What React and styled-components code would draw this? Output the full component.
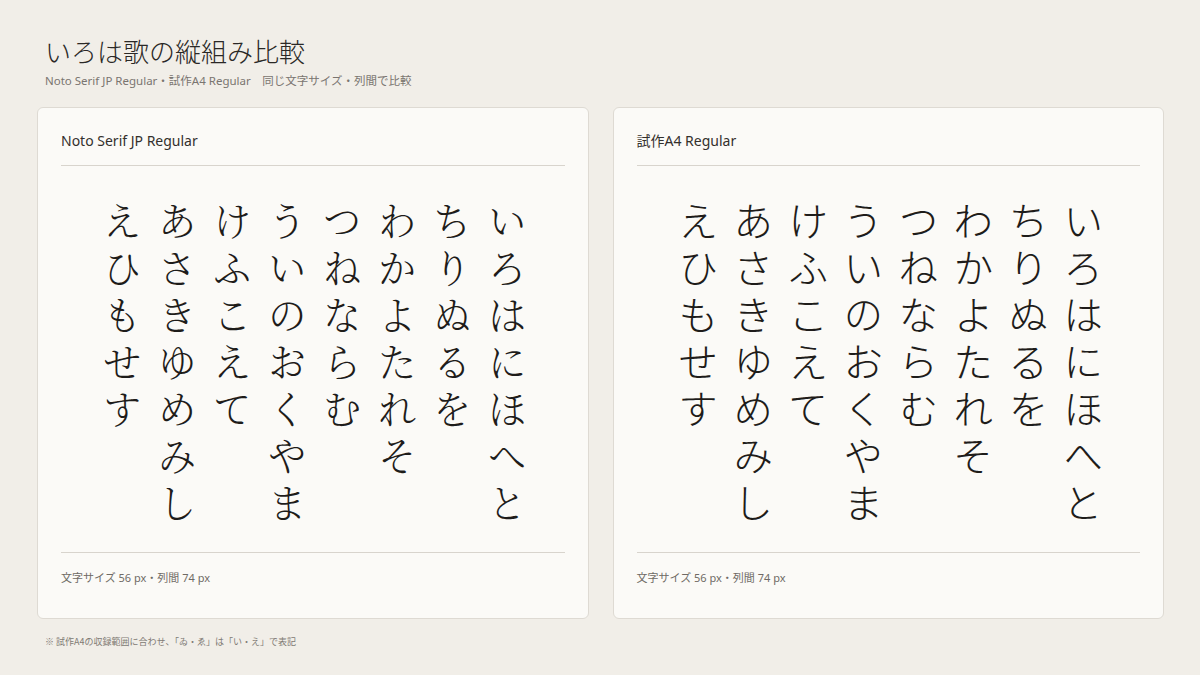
import React from "react";
import styled, { createGlobalStyle } from "styled-components";

const GlobalStyle = createGlobalStyle`
  html, body { margin: 0; padding: 0; }
  body {
    background: #f1eee8;
    font-family: "Noto Sans", "Noto Sans CJK JP", sans-serif;
    color: #2a2826;
  }
`;

const Page = styled.div`
  width: 1200px;
  height: 675px;
  box-sizing: border-box;
  padding: 34px 36px 0 37px;
  display: flex;
  flex-direction: column;
`;

const Title = styled.h1`
  margin: 0 0 0 8px;
  font-family: "Noto Sans CJK JP", serif;
  font-weight: 300;
  font-size: 26px;
  line-height: 34px;
  color: #2a2826;
`;

const Sub = styled.div`
  margin: 4px 0 0 8px;
  font-family: "Noto Sans", "Noto Sans CJK JP", sans-serif;
  font-size: 11.5px;
  color: #7a7570;
`;

const Cards = styled.div`
  display: flex;
  gap: 24px;
  margin-top: 19px;
`;

const Card = styled.section`
  width: 552px;
  height: 512px;
  box-sizing: border-box;
  background: #fbfaf7;
  border: 1px solid #dedad3;
  border-radius: 6px;
  padding: 0 23px;
  display: flex;
  flex-direction: column;
`;

const CardHead = styled.div`
  height: 58px;
  box-sizing: border-box;
  display: flex;
  align-items: flex-end;
  padding-bottom: 15px;
  border-bottom: 1px solid #d8d4cd;
  font-family: "Noto Sans", "Noto Sans CJK JP", sans-serif;
  font-size: 14px;
  color: #33302d;
`;

const Body = styled.div`
  flex: 1;
  display: flex;
  justify-content: center;
  align-items: flex-start;
  padding-top: 35px;
`;

const Poem = styled.div`
  writing-mode: vertical-rl;
  font-family: ${(p) => p.$font};
  font-weight: 300;
  font-size: 40px;
  line-height: 55px;
  letter-spacing: 7px;
  color: #1e1c1a;
  height: 340px;
  padding-left: 4px;
`;

const CardFoot = styled.div`
  height: 66px;
  box-sizing: border-box;
  border-top: 1px solid #d8d4cd;
  padding-top: 16px;
  font-family: "Noto Sans", "Noto Sans CJK JP", sans-serif;
  font-size: 11px;
  color: #6f6a65;
`;

const Note = styled.div`
  margin: 16px 0 0 8px;
  font-family: "Noto Sans CJK JP", sans-serif;
  font-size: 9px;
  color: #807a74;
`;

const lines = [
  "いろはにほへと",
  "ちりぬるを",
  "わかよたれそ",
  "つねならむ",
  "ういのおくやま",
  "けふこえて",
  "あさきゆめみし",
  "えひもせす",
];

const panels = [
  { name: "Noto Serif JP Regular", font: `"Noto Serif CJK JP", "Noto Sans CJK JP", serif` },
  { name: "試作A4 Regular", font: `"Noto Sans CJK JP", sans-serif` },
];

export default function App() {
  return (
    <>
      <GlobalStyle />
      <Page>
        <Title>いろは歌の縦組み比較</Title>
        <Sub>Noto Serif JP Regular・試作A4 Regular　同じ文字サイズ・列間で比較</Sub>
        <Cards>
          {panels.map((p) => (
            <Card key={p.name}>
              <CardHead>{p.name}</CardHead>
              <Body>
                <Poem $font={p.font}>
                  {lines.map((l) => (
                    <div key={l}>{l}</div>
                  ))}
                </Poem>
              </Body>
              <CardFoot>文字サイズ 56 px・列間 74 px</CardFoot>
            </Card>
          ))}
        </Cards>
        <Note>※ 試作A4の収録範囲に合わせ、「ゐ・ゑ」は「い・え」で表記</Note>
      </Page>
    </>
  );
}
